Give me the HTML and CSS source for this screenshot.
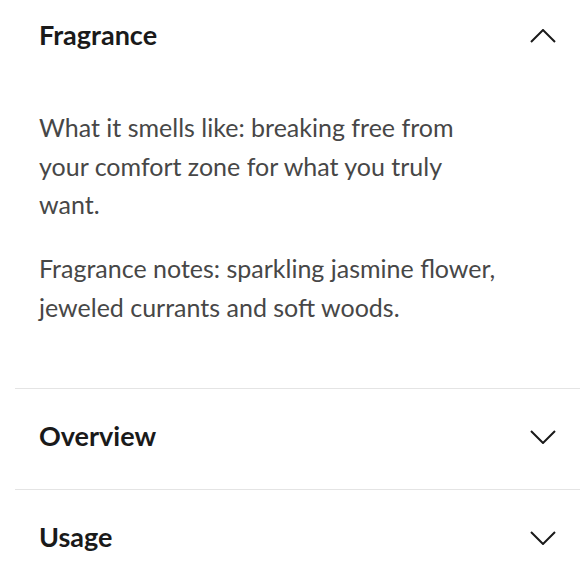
FILE: index.html
```html
<!DOCTYPE html>
<html lang="en">
<head>
<meta charset="utf-8">
<link rel="stylesheet" href="styles.css">
</head>
<body>
<div class="accordion">
  <section class="item item--open">
    <div class="header">
      <h2 class="title">Fragrance</h2>
      <svg class="chev" width="26" height="14" viewBox="0 0 26 14"><path d="M1 13 L13 1 L25 13" fill="none" stroke="#1a1a1a" stroke-width="2"/></svg>
    </div>
    <div class="content">
      <p>What it smells like: breaking free from your comfort zone for what you truly want.</p>
      <p>Fragrance notes: sparkling jasmine flower, jeweled currants and soft woods.</p>
    </div>
  </section>
  <section class="item">
    <div class="header">
      <h2 class="title">Overview</h2>
      <svg class="chev" width="26" height="14" viewBox="0 0 26 14"><path d="M1 1 L13 13 L25 1" fill="none" stroke="#1a1a1a" stroke-width="2"/></svg>
    </div>
  </section>
  <section class="item">
    <div class="header">
      <h2 class="title">Usage</h2>
      <svg class="chev" width="26" height="14" viewBox="0 0 26 14"><path d="M1 1 L13 13 L25 1" fill="none" stroke="#1a1a1a" stroke-width="2"/></svg>
    </div>
  </section>
</div>
</body>
</html>
```
FILE: styles.css
```css
html, body {
  margin: 0;
  padding: 0;
  background: #fff;
}
body {
  font-family: Lato, "Liberation Sans", sans-serif;
  overflow: hidden;
}
.accordion {
  margin-top: -12px;
  padding-left: 15px;
}
.item + .item {
  border-top: 1px solid #e4e4e4;
}
.header {
  box-sizing: border-box;
  height: 100px;
  display: flex;
  align-items: center;
  justify-content: space-between;
  padding: 0 24px 8px 24px;
}
.title {
  margin: 0;
  font-size: 27px;
  font-weight: 700;
  color: #1a1a1a;
}
.chev {
  display: block;
  margin-top: 3px;
}
.content {
  padding: 20px 24px 62px 24px;
  max-width: 460px;
}
.content p {
  margin: 0 0 25.5px 0;
  font-size: 25px;
  line-height: 38.5px;
  color: #474747;
}
.content p:last-child {
  margin-bottom: 0;
}
```
